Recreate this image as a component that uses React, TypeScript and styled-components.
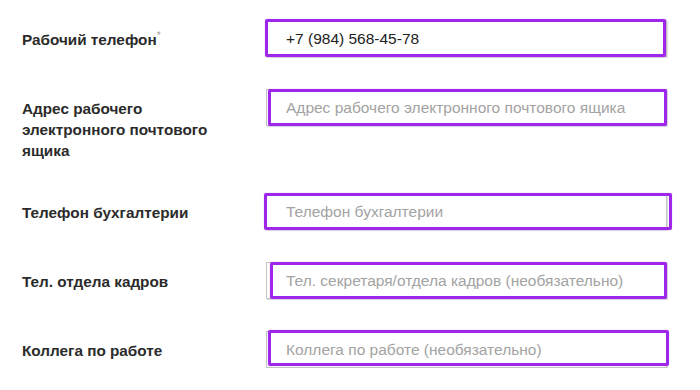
import styled, { createGlobalStyle } from 'styled-components'

const GlobalStyle = createGlobalStyle`
  html, body {
    margin: 0;
    padding: 0;
    background: #ffffff;
  }
  body {
    font-family: "Liberation Sans", Arial, sans-serif;
    color: #2e2e2e;
  }
`

const Form = styled.form`
  display: flex;
  flex-direction: column;
  gap: 32px;
  padding: 20px 0 0 22px;
  width: 700px;
  box-sizing: border-box;
`

const Row = styled.div`
  display: grid;
  grid-template-columns: 244px 401px;
  align-items: start;
`

const Label = styled.label`
  margin-top: 9px;
  font-size: 15.3px;
  font-weight: bold;
  line-height: 21px;
  color: #2b2b2b;
  width: 210px;
`

const Required = styled.sup`
  font-size: 10px;
  font-weight: normal;
  color: #a0a0a0;
  vertical-align: top;
  line-height: 14px;
`

const Field = styled.div`
  position: relative;
  height: 37px;
`

const Input = styled.input`
  width: 100%;
  height: 100%;
  box-sizing: border-box;
  border: 1px solid #c4c4c4;
  box-shadow: 1px 1px 1px rgba(0, 0, 0, 0.12);
  background: #fff;
  padding: 0 0 0 19px;
  font-family: "Liberation Sans", Arial, sans-serif;
  font-size: 15.5px;
  color: #222;
  outline: none;

  &::placeholder {
    color: #a3a3a3;
    font-size: 15.5px;
  }
`

interface Offsets {
  l: number
  t: number
  r: number
  b: number
}

const Highlight = styled.span<{ $o: Offsets }>`
  position: absolute;
  left: ${p => p.$o.l}px;
  top: ${p => p.$o.t}px;
  right: ${p => p.$o.r}px;
  bottom: ${p => p.$o.b}px;
  border: 3px solid #9f27ec;
  border-radius: 2px;
  box-shadow: 0 0 1px rgba(159, 39, 236, 0.6);
  pointer-events: none;
`

interface Item {
  label: string
  required?: boolean
  value?: string
  placeholder: string
  mark: Offsets
}

const items: Item[] = [
  {
    label: 'Рабочий телефон',
    required: true,
    value: '+7 (984) 568-45-78',
    placeholder: '',
    mark: { l: -1, t: -1, r: 1, b: 0 }
  },
  {
    label: 'Адрес рабочего электронного почтового ящика',
    placeholder: 'Адрес рабочего электронного почтового ящика',
    mark: { l: 2, t: 0, r: 0, b: 0 }
  },
  {
    label: 'Телефон бухгалтерии',
    placeholder: 'Телефон бухгалтерии',
    mark: { l: -2, t: 0, r: -5, b: 0 }
  },
  {
    label: 'Тел. отдела кадров',
    placeholder: 'Тел. секретаря/отдела кадров (необязательно)',
    mark: { l: 4, t: 0, r: 0, b: 0 }
  },
  {
    label: 'Коллега по работе',
    placeholder: 'Коллега по работе (необязательно)',
    mark: { l: 2, t: -1, r: -2, b: 2 }
  }
]

export default function App() {
  return (
    <>
      <GlobalStyle />
      <Form onSubmit={e => e.preventDefault()}>
        {items.map((item, index) => (
          <Row key={index}>
            <Label htmlFor={`field-${index}`}>
              {item.label}
              {item.required && <Required>*</Required>}
            </Label>
            <Field>
              <Input
                id={`field-${index}`}
                defaultValue={item.value}
                placeholder={item.placeholder}
              />
              <Highlight $o={item.mark} />
            </Field>
          </Row>
        ))}
      </Form>
    </>
  )
}
